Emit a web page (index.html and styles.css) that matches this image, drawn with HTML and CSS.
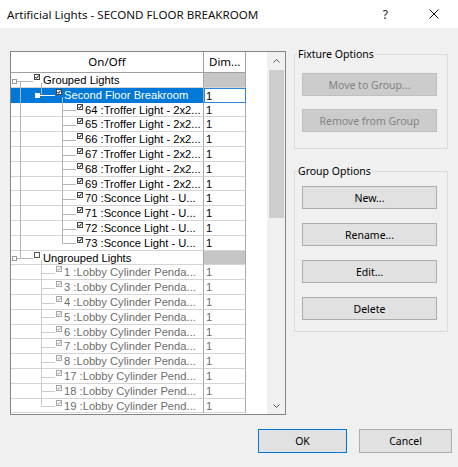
FILE: index.html
```html
<!DOCTYPE html>
<html>
<head>
<meta charset="utf-8">
<title>Artificial Lights</title>
<link rel="stylesheet" href="styles.css">
</head>
<body>
<div class="dialog">
  <div class="titlebar">
    <span class="title">Artificial Lights - SECOND FLOOR BREAKROOM</span>
    <span class="help">?</span>
    <span class="close"><svg width="10" height="10" viewBox="0 0 10 10"><path d="M0.5 0.5 L9.5 9.5 M9.5 0.5 L0.5 9.5" stroke="#111" stroke-width="1" fill="none"/></svg></span>
  </div>

  <div class="main">
    <div class="grid">
      <div class="table">
        <div class="thead">
          <div class="c0">On/Off</div>
          <div class="c1">Dim...</div>
        </div>
        <div class="tbody">
          <svg class="tree" width="193" height="341" viewBox="0 0 193 341">
            <g stroke="#b4b4b4" stroke-width="1" fill="none">
              <path d="M9.5 8.5 V185.5 M6 8.5 H22 M6 185.5 H22"/>
              <path d="M30.5 10 V22"/>
              <path d="M51.5 24 V170.5 M51.5 37.5 H65 M51.5 52.5 H65 M51.5 67.5 H65 M51.5 82.5 H65 M51.5 96.5 H65 M51.5 111.5 H65 M51.5 126.5 H65 M51.5 141.5 H65 M51.5 156.5 H65 M51.5 170.5 H65"/>
            </g>
            <g stroke="#cccccc" stroke-width="1" fill="none">
              <path d="M30.5 187 V333.5 M30.5 200.5 H44 M30.5 215.5 H44 M30.5 230.5 H44 M30.5 244.5 H44 M30.5 259.5 H44 M30.5 274.5 H44 M30.5 289.5 H44 M30.5 304.5 H44 M30.5 318.5 H44 M30.5 333.5 H44"/>
            </g>
            <path d="M28 22.5 H44" stroke="#ffffff" stroke-width="1"/>
            <rect x="1.5" y="6.5" width="4" height="4" fill="#fff" stroke="#999"/>
            <rect x="1.5" y="183.5" width="4" height="4" fill="#fff" stroke="#999"/>
            <rect x="24.5" y="20.5" width="4" height="4" fill="#fff" stroke="#ffffff"/>
          </svg>

          <div class="row"><div class="c0 l0"><i class="cb"><svg width="6" height="6"><rect x=".5" y=".5" width="5" height="5" fill="#fff" stroke="#444"/><path d="M1.4 3 L2.6 4.3 L4.7 1.5" stroke="#000" fill="none"/></svg></i><span class="tx">Grouped Lights</span></div><div class="c1 na"></div></div>
          <div class="row sel"><div class="c0 l1"><i class="cb"><svg width="6" height="6"><rect x=".5" y=".5" width="5" height="5" fill="#fff" stroke="#444"/><path d="M1.4 3 L2.6 4.3 L4.7 1.5" stroke="#000" fill="none"/></svg></i><span class="tx">Second Floor Breakroom</span></div><div class="c1 edit">1</div></div>
          <div class="row"><div class="c0 l2"><i class="cb"><svg width="6" height="6"><rect x=".5" y=".5" width="5" height="5" fill="#fff" stroke="#444"/><path d="M1.4 3 L2.6 4.3 L4.7 1.5" stroke="#000" fill="none"/></svg></i><span class="tx">64 :Troffer Light - 2x2...</span></div><div class="c1">1</div></div>
          <div class="row"><div class="c0 l2"><i class="cb"><svg width="6" height="6"><rect x=".5" y=".5" width="5" height="5" fill="#fff" stroke="#444"/><path d="M1.4 3 L2.6 4.3 L4.7 1.5" stroke="#000" fill="none"/></svg></i><span class="tx">65 :Troffer Light - 2x2...</span></div><div class="c1">1</div></div>
          <div class="row"><div class="c0 l2"><i class="cb"><svg width="6" height="6"><rect x=".5" y=".5" width="5" height="5" fill="#fff" stroke="#444"/><path d="M1.4 3 L2.6 4.3 L4.7 1.5" stroke="#000" fill="none"/></svg></i><span class="tx">66 :Troffer Light - 2x2...</span></div><div class="c1">1</div></div>
          <div class="row"><div class="c0 l2"><i class="cb"><svg width="6" height="6"><rect x=".5" y=".5" width="5" height="5" fill="#fff" stroke="#444"/><path d="M1.4 3 L2.6 4.3 L4.7 1.5" stroke="#000" fill="none"/></svg></i><span class="tx">67 :Troffer Light - 2x2...</span></div><div class="c1">1</div></div>
          <div class="row"><div class="c0 l2"><i class="cb"><svg width="6" height="6"><rect x=".5" y=".5" width="5" height="5" fill="#fff" stroke="#444"/><path d="M1.4 3 L2.6 4.3 L4.7 1.5" stroke="#000" fill="none"/></svg></i><span class="tx">68 :Troffer Light - 2x2...</span></div><div class="c1">1</div></div>
          <div class="row"><div class="c0 l2"><i class="cb"><svg width="6" height="6"><rect x=".5" y=".5" width="5" height="5" fill="#fff" stroke="#444"/><path d="M1.4 3 L2.6 4.3 L4.7 1.5" stroke="#000" fill="none"/></svg></i><span class="tx">69 :Troffer Light - 2x2...</span></div><div class="c1">1</div></div>
          <div class="row"><div class="c0 l2"><i class="cb"><svg width="6" height="6"><rect x=".5" y=".5" width="5" height="5" fill="#fff" stroke="#444"/><path d="M1.4 3 L2.6 4.3 L4.7 1.5" stroke="#000" fill="none"/></svg></i><span class="tx">70 :Sconce Light - U...</span></div><div class="c1">1</div></div>
          <div class="row"><div class="c0 l2"><i class="cb"><svg width="6" height="6"><rect x=".5" y=".5" width="5" height="5" fill="#fff" stroke="#444"/><path d="M1.4 3 L2.6 4.3 L4.7 1.5" stroke="#000" fill="none"/></svg></i><span class="tx">71 :Sconce Light - U...</span></div><div class="c1">1</div></div>
          <div class="row"><div class="c0 l2"><i class="cb"><svg width="6" height="6"><rect x=".5" y=".5" width="5" height="5" fill="#fff" stroke="#444"/><path d="M1.4 3 L2.6 4.3 L4.7 1.5" stroke="#000" fill="none"/></svg></i><span class="tx">72 :Sconce Light - U...</span></div><div class="c1">1</div></div>
          <div class="row"><div class="c0 l2"><i class="cb"><svg width="6" height="6"><rect x=".5" y=".5" width="5" height="5" fill="#fff" stroke="#444"/><path d="M1.4 3 L2.6 4.3 L4.7 1.5" stroke="#000" fill="none"/></svg></i><span class="tx">73 :Sconce Light - U...</span></div><div class="c1">1</div></div>
          <div class="row"><div class="c0 l0"><i class="cb"><svg width="6" height="6"><rect x=".5" y=".5" width="5" height="5" fill="#fff" stroke="#555"/></svg></i><span class="tx">Ungrouped Lights</span></div><div class="c1 na"></div></div>
          <div class="row dim"><div class="c0 l1"><i class="cb"><svg width="6" height="6"><rect x=".5" y=".5" width="5" height="5" fill="#fff" stroke="#a8a8a8"/><path d="M1.4 3 L2.6 4.3 L4.7 1.5" stroke="#a0a0a0" fill="none"/></svg></i><span class="tx">1 :Lobby Cylinder Penda...</span></div><div class="c1">1</div></div>
          <div class="row dim"><div class="c0 l1"><i class="cb"><svg width="6" height="6"><rect x=".5" y=".5" width="5" height="5" fill="#fff" stroke="#a8a8a8"/><path d="M1.4 3 L2.6 4.3 L4.7 1.5" stroke="#a0a0a0" fill="none"/></svg></i><span class="tx">3 :Lobby Cylinder Penda...</span></div><div class="c1">1</div></div>
          <div class="row dim"><div class="c0 l1"><i class="cb"><svg width="6" height="6"><rect x=".5" y=".5" width="5" height="5" fill="#fff" stroke="#a8a8a8"/><path d="M1.4 3 L2.6 4.3 L4.7 1.5" stroke="#a0a0a0" fill="none"/></svg></i><span class="tx">4 :Lobby Cylinder Penda...</span></div><div class="c1">1</div></div>
          <div class="row dim"><div class="c0 l1"><i class="cb"><svg width="6" height="6"><rect x=".5" y=".5" width="5" height="5" fill="#fff" stroke="#a8a8a8"/><path d="M1.4 3 L2.6 4.3 L4.7 1.5" stroke="#a0a0a0" fill="none"/></svg></i><span class="tx">5 :Lobby Cylinder Penda...</span></div><div class="c1">1</div></div>
          <div class="row dim"><div class="c0 l1"><i class="cb"><svg width="6" height="6"><rect x=".5" y=".5" width="5" height="5" fill="#fff" stroke="#a8a8a8"/><path d="M1.4 3 L2.6 4.3 L4.7 1.5" stroke="#a0a0a0" fill="none"/></svg></i><span class="tx">6 :Lobby Cylinder Penda...</span></div><div class="c1">1</div></div>
          <div class="row dim"><div class="c0 l1"><i class="cb"><svg width="6" height="6"><rect x=".5" y=".5" width="5" height="5" fill="#fff" stroke="#a8a8a8"/><path d="M1.4 3 L2.6 4.3 L4.7 1.5" stroke="#a0a0a0" fill="none"/></svg></i><span class="tx">7 :Lobby Cylinder Penda...</span></div><div class="c1">1</div></div>
          <div class="row dim"><div class="c0 l1"><i class="cb"><svg width="6" height="6"><rect x=".5" y=".5" width="5" height="5" fill="#fff" stroke="#a8a8a8"/><path d="M1.4 3 L2.6 4.3 L4.7 1.5" stroke="#a0a0a0" fill="none"/></svg></i><span class="tx">8 :Lobby Cylinder Penda...</span></div><div class="c1">1</div></div>
          <div class="row dim"><div class="c0 l1"><i class="cb"><svg width="6" height="6"><rect x=".5" y=".5" width="5" height="5" fill="#fff" stroke="#a8a8a8"/><path d="M1.4 3 L2.6 4.3 L4.7 1.5" stroke="#a0a0a0" fill="none"/></svg></i><span class="tx">17 :Lobby Cylinder Pend...</span></div><div class="c1">1</div></div>
          <div class="row dim"><div class="c0 l1"><i class="cb"><svg width="6" height="6"><rect x=".5" y=".5" width="5" height="5" fill="#fff" stroke="#a8a8a8"/><path d="M1.4 3 L2.6 4.3 L4.7 1.5" stroke="#a0a0a0" fill="none"/></svg></i><span class="tx">18 :Lobby Cylinder Pend...</span></div><div class="c1">1</div></div>
          <div class="row dim"><div class="c0 l1"><i class="cb"><svg width="6" height="6"><rect x=".5" y=".5" width="5" height="5" fill="#fff" stroke="#a8a8a8"/><path d="M1.4 3 L2.6 4.3 L4.7 1.5" stroke="#a0a0a0" fill="none"/></svg></i><span class="tx">19 :Lobby Cylinder Pend...</span></div><div class="c1">1</div></div>
        </div>
      </div>
      <div class="blank"></div>
      <div class="vscroll">
        <div class="arrow up"><svg width="7" height="4" viewBox="0 0 7 4"><path d="M0.5 3.5 L3.5 0.5 L6.5 3.5" stroke="#555" fill="none"/></svg></div>
        <div class="thumb"></div>
        <div class="track"></div>
        <div class="arrow down"><svg width="7" height="4" viewBox="0 0 7 4"><path d="M0.5 0.5 L3.5 3.5 L6.5 0.5" stroke="#555" fill="none"/></svg></div>
      </div>
    </div>

    <div class="side">
      <div class="groupbox fixture">
        <div class="gb-label">Fixture Options</div>
        <button class="btn dis">Move to Group...</button>
        <button class="btn dis">Remove from Group</button>
      </div>
      <div class="groupbox group">
        <div class="gb-label">Group Options</div>
        <button class="btn">New...</button>
        <button class="btn">Rename...</button>
        <button class="btn">Edit...</button>
        <button class="btn">Delete</button>
      </div>
    </div>
  </div>

  <div class="footer">
    <button class="btn ok">OK</button>
    <button class="btn cancel">Cancel</button>
  </div>
</div>
</body>
</html>
```

FILE: styles.css
```css
* { box-sizing: border-box; }

html, body {
  margin: 0;
  padding: 0;
  background: #f0f0f0;
}

.dialog {
  width: 458px;
  height: 467px;
  background: #f0f0f0;
  font-family: "Noto Sans", "Open Sans", sans-serif;
  color: #000;
  overflow: hidden;
}

/* title bar */
.titlebar {
  height: 28px;
  background: #fff;
  display: flex;
  align-items: center;
  padding-left: 7px;
}
.title {
  flex: 1;
  font-size: 11.6px;
  white-space: nowrap;
  color: #111;
}
.help {
  font-size: 12px;
  margin-right: 41px;
  color: #222;
}
.close {
  width: 10px;
  height: 10px;
  margin-right: 19px;
  display: flex;
}

/* main area */
.main {
  display: flex;
  align-items: flex-start;
  padding: 23px 0 0 10px;
}

.grid {
  width: 276px;
  height: 364px;
  border: 1px solid #858585;
  background: #fff;
  display: flex;
  flex: none;
}

.table {
  width: 235px;
  display: flex;
  flex-direction: column;
}

.thead {
  display: flex;
  height: 21px;
  border-bottom: 1px solid #a0a0a0;
  font-size: 11.5px;
  line-height: 20px;
}
.thead .c0 {
  width: 193px;
  text-align: center;
  border-right: 1px solid #a0a0a0;
}
.thead .c1 {
  width: 42px;
  padding-left: 5px;
  border-right: 1px solid #a0a0a0;
}

.tbody {
  position: relative;
}
.tree {
  position: absolute;
  left: 0;
  top: 0;
  z-index: 2;
  pointer-events: none;
}

.row {
  display: flex;
  height: 14.8px;
  font-family: "Liberation Sans", Arial, sans-serif;
  font-size: 11.2px;
  line-height: 14px;
}
.row .c0 {
  width: 193px;
  display: flex;
  align-items: flex-start;
  white-space: nowrap;
  overflow: hidden;
  border-right: 1px solid #a8a8a8;
  border-bottom: 1px solid #d4d4d4;
}
.row .c1 {
  width: 42px;
  padding-left: 2px;
  border-right: 1px solid #a8a8a8;
  border-bottom: 1px solid #d4d4d4;
}

.cb {
  display: block;
  width: 6px;
  height: 6px;
  flex: none;
  margin-top: 1px;
}
.cb svg { display: block; }

.l0 .cb { margin-left: 23px; }
.l0 .tx { margin-left: 3px; }
.l1 .cb { margin-left: 45px; }
.l1 .tx { margin-left: 2px; }
.l2 .cb { margin-left: 66px; }
.l2 .tx { margin-left: 2px; }

.row .c1.na {
  background: #c6c6c6;
}

.row.sel .c0 {
  background: #0078d7;
  color: #fff;
  border-bottom-color: #0078d7;
}
.row.sel .c1.edit {
  border: 1px solid #2f86dc;
  padding-left: 1px;
  line-height: 15px;
}

.row.dim .c0,
.row.dim .c1 {
  color: #6e6e6e;
}

.blank {
  width: 21px;
  background: #fff;
}

.vscroll {
  width: 18px;
  background: #f0f0f0;
  display: flex;
  flex-direction: column;
}
.arrow {
  display: flex;
  align-items: center;
  justify-content: center;
}
.arrow.up { height: 18px; }
.arrow.down { height: 17px; }
.thumb {
  height: 148px;
  margin: 0 1.5px;
  background: #cdcdcd;
}
.track { flex: 1; }

/* side panel */
.side {
  width: 154px;
  margin-left: 8px;
  margin-top: 3px;
  display: flex;
  flex-direction: column;
}

.groupbox {
  border: 1px solid #dcdcdc;
  padding: 0 0 0 7px;
  display: flex;
  flex-direction: column;
}
.gb-label {
  align-self: flex-start;
  height: 14px;
  line-height: 14px;
  margin: -8px 0 0 -5px;
  padding: 0 1px;
  background: #f0f0f0;
  font-size: 10.5px;
}

.fixture { padding-bottom: 16px; }
.fixture .gb-label { margin-bottom: 12px; }
.fixture .btn + .btn { margin-top: 13px; }

.group {
  margin-top: 22px;
  padding-bottom: 11px;
}
.group .gb-label { margin-bottom: 8px; }
.group .btn + .btn { margin-top: 14px; }

.btn {
  display: flex;
  align-items: center;
  justify-content: center;
  width: 135px;
  height: 23px;
  padding: 0;
  margin: 0;
  border: 1px solid #adadad;
  background: #e1e1e1;
  font-family: "Noto Sans", "Open Sans", sans-serif;
  font-size: 10.5px;
  color: #000;
}
.btn.dis {
  background: #cccccc;
  border-color: #bfbfbf;
  color: #838383;
}

/* footer */
.footer {
  display: flex;
  justify-content: flex-end;
  gap: 12px;
  padding-right: 6px;
  margin-top: 14px;
}
.footer .btn {
  height: 24px;
}
.btn.ok {
  width: 89px;
  border-color: #0078d7;
}
.btn.cancel {
  width: 93px;
}
```
